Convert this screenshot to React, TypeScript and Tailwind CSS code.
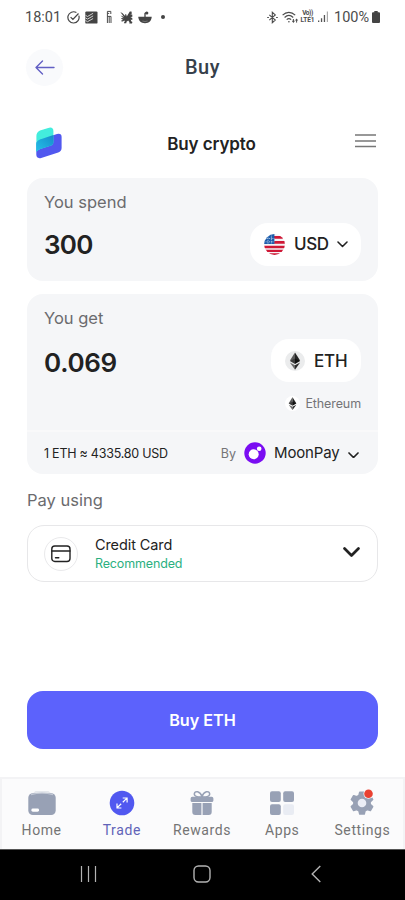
import type { ReactNode } from "react";

function StatusBar() {
  return (
    <div className="flex h-[34px] items-center px-[25px] font-['Roboto',sans-serif] text-[14.5px] text-[#4c4c4c]">
      <span className="w-[36px] pt-[1px] whitespace-nowrap">18:01</span>
      <svg className="ml-[6px]" width="13" height="13" viewBox="0 0 13 13" fill="none" stroke="#444" strokeWidth="1.2">
        <path d="M11.8 4.6A5.6 5.6 0 1 1 9.4 1.6M3.6 6.2l2.3 2.3 5.6-6" />
      </svg>
      <svg className="ml-[5px]" width="13" height="13" viewBox="0 0 13 13">
        <rect x="0.3" y="0.4" width="12.2" height="12.2" rx="1.2" fill="#444" />
        <path d="M.5 4.3l2 1.2 5.6-3.2M.5 6.9l2 1.2 5.6-3.2M.5 9.5l2 1.2 5.6-3.2" fill="none" stroke="#ddd" strokeWidth="0.9" />
      </svg>
      <svg className="ml-[7px]" width="8" height="14" viewBox="0 0 8 14" fill="none" stroke="#4c4c4c" strokeWidth="1">
        <path d="M5.8 4V1.4H2.4V13M4.2 6.4V13M6 6.4V13M2.4 6.4H6M2.4 3.4h1.8" />
      </svg>
      <svg className="ml-[7px]" width="13" height="13" viewBox="0 0 13 13" fill="#444">
        <path d="M.3.9l2.3 1.3 2.5 2.9L5.3 3l1 .4.5 2.2 1-1.8L9.8.6h1.7l.3 1.8L10.3 4l1.8-.7.4 2.2-2 .8 1.8.6v2l-1.6-.4.5 1.7 1.2.7-.4 1.5H9.3l.2-1.1-1.3-1.8-1.7 1.2-.2 1.5H3.9l.5-1.4.6-.5-.8-.7-1.3.9-1.8-.2.5-1 1.7-.4L2 8.3.9 7.2l1.4-.1 1.3.4L.6 4.4l2 .8 1.5 1.3L2.5 4z" />
      </svg>
      <svg className="ml-[5px]" width="14" height="13" viewBox="0 0 14 13">
        <path d="M.3 5.8h13.4c0 3.8-2.7 6.4-6.7 6.4S.3 9.6.3 5.8z" fill="#444" />
        <path d="M7 6V2.4l2-1" fill="none" stroke="#444" strokeWidth="1.3" />
        <circle cx="8.8" cy="2" r="1.6" fill="#444" />
        <path d="M4.4 10q2.6 1.1 5.2 0" fill="none" stroke="#999" strokeWidth="0.6" />
      </svg>
      <span className="ml-[9px] size-1 rounded-full bg-[#444]" />

      <svg className="ml-auto" width="11" height="13" viewBox="0 0 11 13" fill="none" stroke="#4c4c4c" strokeWidth="1.1">
        <path d="M2.3 3.8l6 5.2-3 2.7V1.3l3 2.6-6 5.2M.2 6.5h1.7M9.1 6.5h1.7" />
      </svg>
      <svg className="ml-[4px]" width="17" height="13" viewBox="0 0 17 13" fill="none" stroke="#4c4c4c" strokeWidth="1.15">
        <path d="M.6 4.1C4.3.4 9.4.4 13.2 4.1M2.6 6.5c2.6-2.6 6-2.6 8.6 0M4.7 8.7c1.4-1.4 3-1.4 4.4 0" />
        <circle cx="6.9" cy="10.8" r=".8" fill="#4c4c4c" stroke="none" />
        <path d="M11.4 8v3M14.6 8.6v3" strokeWidth="1" />
        <path d="M9.8 9.8h3.2l-1.6 2.2zM13 9.6h3.2l-1.6-2.2z" fill="#4c4c4c" stroke="none" />
      </svg>
      <span className="ml-[1px] flex w-[15px] flex-col items-center text-[6.5px] leading-[7px] font-bold whitespace-nowrap">
        <span className="tracking-[-0.4px]">Vo))</span>
        <span className="tracking-[-0.1px]">LTE1</span>
      </span>
      <svg className="ml-[3px]" width="11" height="12" viewBox="0 0 11 12" fill="#555">
        <path d="M0 9.6h1.3V11H0zM2.9 7.3h1.3V11H2.9zM5.8 4h1.3v7H5.8z" />
        <path d="M8.8.5h1.2V11H8.8z" fill="#aaa" />
      </svg>
      <span className="ml-[5px] w-[35px] pt-[1px] text-[14.5px] whitespace-nowrap">100%</span>
      <svg className="ml-[3px]" width="8" height="12" viewBox="0 0 8 12" fill="#444">
        <path d="M2.3 0h3.4v1.3H7q1 0 1 1V11q0 1-1 1H1q-1 0-1-1V2.3q0-1 1-1h1.3z" />
      </svg>
    </div>
  );
}

function BrandLogo() {
  return (
    <svg width="28" height="32" viewBox="0 0 28 32">
      <defs>
        <linearGradient id="brand-overlap" x1="0" y1="1" x2="1" y2="0">
          <stop offset="0" stopColor="#25bfe8" />
          <stop offset="1" stopColor="#168dcb" />
        </linearGradient>
      </defs>
      <path d="M4.5 12.8L22 6.9q4.6-1 4.6 2.8v11.2q0 3.2-3.4 4.6L6.2 31q-4.9 1-4.9-3.4V17.2q0-3 3.2-4.4z" fill="#5158ef" />
      <path d="M5 3.5L13.2.9q5.2-1.3 5.2 3.4V15q0 3-3 3.8L5.3 22q-2.8.9-3.9 2.8V9.1q0-4 3.6-5.6z" fill="#43eddd" />
      <path d="M4.5 12.8q.8-.5 2-.8l11.9-4V15q0 3-3 3.8L5.3 22q-2.8.9-4 2.8v-7.6q0-3 3.2-4.4z" fill="url(#brand-overlap)" />
    </svg>
  );
}

function UsFlag() {
  return (
    <svg width="21" height="21" viewBox="0 0 21 21">
      <defs>
        <clipPath id="flag-clip">
          <circle cx="10.5" cy="10.5" r="10.4" />
        </clipPath>
      </defs>
      <g clipPath="url(#flag-clip)">
        <rect width="21" height="21" fill="#f4f4f6" />
        <path d="M10 2h11v2.7H10zM10 7.1h11v2.7H10zM0 11.7h21v2.6H0zM0 15.8h21v2.3H0zM3 19.2h15v2H3z" fill="#cf1836" />
        <path d="M0 0h10.4v10H0z" fill="#1c5cab" />
        <path d="M0 4.5h10.4M0 7.8h10.4M4 1v9M7.4 0v10" stroke="#b9d1ec" strokeWidth=".8" strokeDasharray="1.4 1" />
      </g>
    </svg>
  );
}

function EthIcon({ size, bg }: { size: number; bg: string }) {
  return (
    <svg width={size} height={size} viewBox="0 0 20 20">
      <circle cx="10" cy="10" r="10" fill={bg} />
      <path d="M10 1.6v9.9l-5.1-1.9z" fill="#5b5b5b" />
      <path d="M10 1.6v9.9l5.1-1.9z" fill="#252525" />
      <path d="M4.9 9.9L10 7.5v5.4z" fill="#3c3c3c" />
      <path d="M15.1 9.9L10 7.5v5.4z" fill="#111" />
      <path d="M4.9 11.5L10 14.3v4.5z" fill="#6b6b6b" />
      <path d="M15.1 11.5L10 14.3v4.5z" fill="#2b2b2b" />
    </svg>
  );
}

function Chevron({ width, stroke }: { width: number; stroke: number }) {
  return (
    <svg width={width} height={width * 0.6} viewBox="0 0 10 6" fill="none" stroke="#222" strokeWidth={stroke} strokeLinecap="round" strokeLinejoin="round">
      <path d="M.9.9L5 5 9.1.9" />
    </svg>
  );
}

interface Tab {
  label: string;
  active?: boolean;
  icon: ReactNode;
}

const tabs: Tab[] = [
  {
    label: "Home",
    icon: (
      <svg width="28" height="26" viewBox="0 0 28 26">
        <path d="M7.5 1h13l4.5 4H3z" fill="#e4e7ec" />
        <rect x=".3" y="3.2" width="27.4" height="21.8" rx="4.5" fill="#98a1b5" />
        <path d="M3 4.6Q14 1.4 25 4.6" fill="none" stroke="#c3c9d5" strokeWidth="1.2" />
        <rect x="3.4" y="18.4" width="7.6" height="3.3" rx="1.4" fill="#fff" />
      </svg>
    ),
  },
  {
    label: "Trade",
    active: true,
    icon: (
      <svg width="26" height="26" viewBox="0 0 26 26" fill="none" stroke="#fff" strokeWidth="1.2">
        <circle cx="13" cy="13" r="12.3" fill="#5158f0" stroke="none" />
        <path d="M13.8 12.2l4.2-4.1M13.7 8h4.4v4.4M12.2 13.8L8 17.9M8 13.6V18h4.4" />
      </svg>
    ),
  },
  {
    label: "Rewards",
    icon: (
      <svg width="24" height="26" viewBox="0 0 24 26" fill="#98a1b5">
        <path d="M11.5 7C7.5 7.3 3.8 6.2 4.4 3.5 5.1.6 10 .8 12 6.500 14 .8 18.9.6 19.600 3.500 20.200 6.200 16.500 7.300 12.500 7" fill="none" stroke="#98a1b5" strokeWidth="1.5" />
        <path d="M2.3 6.800h19.400q1.700 0 1.700 1.700v1.900q0 1.600-1.700 1.600H2.300Q.6 12 .6 10.400V8.500q0-1.700 1.700-1.700zM2.300 13h9.100v12H5.300q-3 0-3-3zM12.600 13h9.100v9q0 3-3 3h-6.100z" />
      </svg>
    ),
  },
  {
    label: "Apps",
    icon: (
      <svg width="26" height="26" viewBox="0 0 26 26" fill="#98a1b5">
        <rect x="1" y="1.2" width="10.8" height="10.8" rx="2" />
        <rect x="14.2" y="1.2" width="10.8" height="10.8" rx="2" />
        <rect x="1" y="14.2" width="10.8" height="10.8" rx="2" />
        <rect x="14.2" y="14.2" width="10.8" height="10.8" rx="2" fill="#e9ecf3" />
      </svg>
    ),
  },
  {
    label: "Settings",
    icon: (
      <svg width="26" height="26" viewBox="0 0 26 26">
        <path d="M10.7 2.2h4.6l.8 3.2 2.1 1.2 3.2-1 2.3 4-2.5 2.3v2.4l2.5 2.3-2.3 4-3.2-1-2.1 1.2-.8 3.2h-4.6l-.8-3.2-2.1-1.2-3.2 1-2.3-4 2.5-2.3v-2.4L2.3 9.6l2.3-4 3.2 1 2.1-1.2z" fill="#98a1b5" stroke="#98a1b5" strokeWidth="1.4" strokeLinejoin="round" />
        <circle cx="13" cy="13" r="4.3" fill="#eceef6" />
        <circle cx="19.5" cy="3.7" r="5" fill="#fafbfc" />
        <circle cx="19.5" cy="3.7" r="4.3" fill="#ea4132" />
      </svg>
    ),
  },
];

function TabBar() {
  return (
    <nav className="flex h-[72px] shrink-0 border-2 border-b-0 border-[#f3f3f5] bg-[#fbfbfc] font-['Roboto',sans-serif]">
      {tabs.map((tab) => (
        <div key={tab.label} className="flex flex-1 flex-col items-center pt-[11px] pr-[1px]">
          <div className="h-[26px] [&>svg]:overflow-visible">{tab.icon}</div>
          <span
            className={
              tab.active
                ? "mt-[5px] text-[14px] leading-[18px] tracking-[0.6px] text-[#6163b8]"
                : "mt-[5px] text-[14px] leading-[18px] tracking-[0.6px] text-[#747474]"
            }
          >
            {tab.label}
          </span>
        </div>
      ))}
    </nav>
  );
}

export default function App() {
  return (
    <div className="flex h-[900px] w-[405px] flex-col overflow-hidden bg-white font-['Inter',sans-serif] text-[#222]">
      <StatusBar />

      <header className="grid h-[66px] grid-cols-[37px_1fr_37px] items-center px-[26px]">
        <button className="flex size-[37px] items-center justify-center rounded-full bg-[#f9fafc]" aria-label="Back">
          <svg width="20" height="15" viewBox="0 0 20 15" fill="none" stroke="#625fc4" strokeWidth="1.4" strokeLinecap="round" strokeLinejoin="round">
            <path d="M19 7.5H1M7.5 1L1 7.5 7.5 14" />
          </svg>
        </button>
        <h1 className="text-center font-['Roboto',sans-serif] text-[20px] font-medium tracking-[0.5px] text-[#36404b]">Buy</h1>
      </header>

      <main className="flex flex-1 flex-col px-[27px]">
        <div className="mt-[17px] flex h-[61px] items-center justify-between">
          <div className="w-[41px] pb-[9px] pl-[8px]">
            <BrandLogo />
          </div>
          <h2 className="pb-[6px] text-[17px] font-semibold tracking-[-0.1px]">Buy crypto</h2>
          <svg className="mr-[2px] mb-[13px] shrink-0" width="21" height="14" viewBox="0 0 21 14" stroke="#777" strokeWidth="1.3">
            <path d="M0 1h21M0 7h21M0 12.5h21" />
          </svg>
        </div>

        <section className="h-[103px] rounded-[16px] bg-[#f5f6f8] px-[17px]">
          <p className="pt-[14px] text-[16.5px] leading-[21px] text-[#6b6b6e]">You spend</p>
          <div className="mt-[10px] flex h-[43px] items-center justify-between">
            <span className="pb-[1px] text-[26px] font-semibold tracking-[-0.7px]">300</span>
            <button className="flex h-[43px] w-[111px] items-center rounded-[18px] bg-white pl-[14px]">
              <UsFlag />
              <span className="ml-[9px] w-[34px] pt-[1px] text-[17px] font-medium tracking-[-0.4px]">USD</span>
              <span className="ml-[9px]">
                <Chevron width={11} stroke={1.4} />
              </span>
            </button>
          </div>
        </section>

        <section className="mt-[13px] h-[180px] rounded-[16px] bg-[#f5f6f8]">
          <div className="h-[138px] border-b-2 border-[#f9f9fa] px-[17px]">
            <p className="pt-[14px] text-[16.5px] leading-[21px] text-[#6b6b6e]">You get</p>
            <div className="mt-[10px] flex h-[43px] items-center justify-between">
              <span className="pt-[4px] text-[26px] font-semibold tracking-[-0.3px]">0.069</span>
              <button className="flex h-[43px] w-[90px] items-center rounded-[18px] bg-white pl-[14px]">
                <EthIcon size={20} bg="#ebeced" />
                <span className="ml-[9px] pt-[2px] text-[17px] font-medium tracking-[-0.2px]">ETH</span>
              </button>
            </div>
            <div className="mt-[13px] flex items-center justify-end gap-[5px] text-[12.5px] leading-[17px] tracking-[-0.1px] text-[#747477]">
              <EthIcon size={15} bg="#fff" />
              <span>Ethereum</span>
            </div>
          </div>
          <div className="flex h-[42px] items-center px-[17px]">
            <span className="pt-[2px] text-[12.5px] tracking-[-0.24px]">1 ETH ≈ 4335.80 USD</span>
            <span className="ml-auto pt-[2px] text-[12.5px] text-[#747477]">By</span>
            <svg className="ml-[8px]" width="22" height="22" viewBox="0 0 22 22">
              <circle cx="11" cy="11" r="10.7" fill="#7a0df2" />
              <circle cx="9.7" cy="12.2" r="5" fill="#fff" />
              <circle cx="15.2" cy="6.7" r="2.3" fill="#fff" />
            </svg>
            <span className="ml-[8px] w-[66px] text-[15px] tracking-[-0.15px]">MoonPay</span>
            <span className="mt-[4px] mr-[2px] ml-[8px]">
              <Chevron width={11} stroke={1.5} />
            </span>
          </div>
        </section>

        <p className="mt-[16px] text-[16.5px] leading-[21px] text-[#6b6b6e]">Pay using</p>
        <button className="mt-[14px] flex h-[57px] items-center rounded-[17px] border border-[#e7e7e9] pr-[17px] pl-[16px] text-left">
          <span className="flex size-[34px] items-center justify-center rounded-full border border-[#e9e9eb]">
            <svg width="20" height="18" viewBox="0 0 20 18" fill="none" stroke="#222" strokeWidth="1.4" strokeLinecap="round">
              <rect x=".8" y="1" width="18.2" height="15.5" rx="3" />
              <path d="M1 6h18M4.5 12.7h3.3" />
            </svg>
          </span>
          <span className="ml-[17px] flex flex-col pt-[1px]">
            <span className="text-[14.5px] leading-[19px] tracking-[-0.1px]">Credit Card</span>
            <span className="pt-[1px] text-[12.5px] leading-[18px] tracking-[-0.15px] text-[#2bb07f]">Recommended</span>
          </span>
          <span className="ml-auto pb-[2px]">
            <Chevron width={17} stroke={1.6} />
          </span>
        </button>

        <button className="mt-auto mb-[28px] h-[58px] rounded-[16px] bg-[#5c62fc] pt-[1px] text-[16.2px] font-semibold text-white">
          Buy ETH
        </button>
      </main>

      <TabBar />
      <div className="flex h-[51px] shrink-0 items-center justify-between border-t border-[#555] bg-black pr-[84px] pb-[2px] pl-[80px]">
        <svg width="17" height="18" viewBox="0 0 17 18" stroke="#b3b3b3" strokeWidth="1.2">
          <path d="M1.5 1v16M8.5 1v16M15.5 1v16" />
        </svg>
        <svg className="-translate-x-[2px]" width="18" height="18" viewBox="0 0 18 18" fill="none" stroke="#b3b3b3" strokeWidth="1.4">
          <rect x="1" y="1" width="16" height="16" rx="4.5" />
        </svg>
        <svg width="10" height="18" viewBox="0 0 10 18" fill="none" stroke="#b3b3b3" strokeWidth="1.4">
          <path d="M9.3 1L1.2 9l8.1 8" />
        </svg>
      </div>
    </div>
  );
}
